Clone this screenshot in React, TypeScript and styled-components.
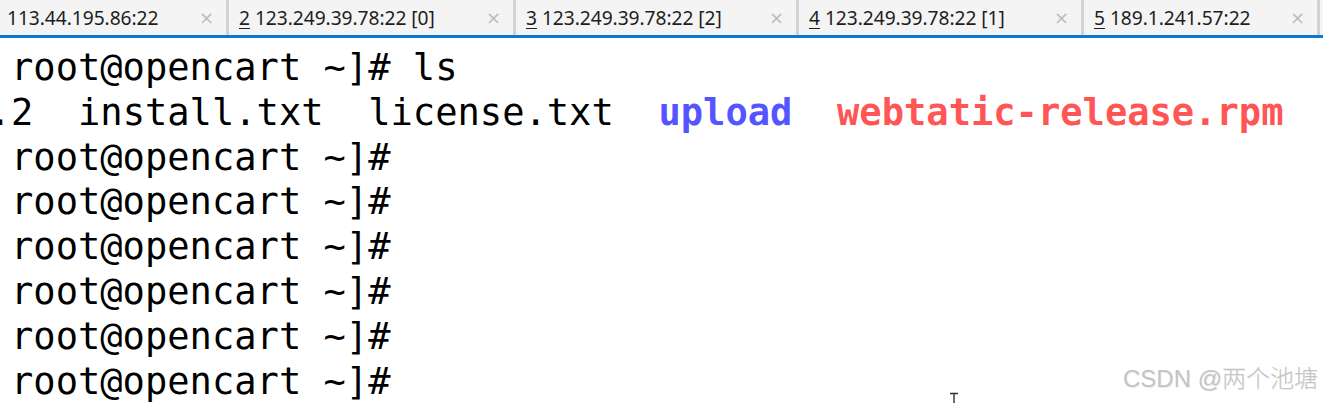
import React from "react";
import styled, { createGlobalStyle } from "styled-components";

const Global = createGlobalStyle`
  html, body { margin: 0; padding: 0; background: #ffffff; }
  body { width: 1323px; height: 403px; overflow: hidden; }
`;

const Page = styled.div`
  position: relative;
  width: 1323px;
  height: 403px;
  overflow: hidden;
  background: #ffffff;
  display: flex;
  flex-direction: column;
`;

const TabBar = styled.div`
  display: flex;
  height: 35px;
  background: #f4f4f4;
  border-bottom: 3px solid #0b78d0;
  flex: none;
`;

const Tab = styled.div<{ $w: number; $first?: boolean }>`
  flex: none;
  width: ${(p) => p.$w}px;
  display: flex;
  align-items: center;
  justify-content: space-between;
  padding: 0 12px 0 ${(p) => (p.$first ? 7 : 10)}px;
  box-sizing: border-box;
  border-right: 3px solid #d2d2d2;
  font-family: "Noto Sans", "Open Sans", sans-serif;
  font-size: 19.2px;
  letter-spacing: -0.05px;
  color: #1e1e1e;
  white-space: nowrap;
`;

const Num = styled.span`
  text-decoration: underline;
  text-underline-offset: 3px;
  margin-right: 5px;
`;

const Close = styled.span`
  color: #bdbdbd;
  font-size: 18px;
  font-family: "DejaVu Sans", sans-serif;
`;

const Terminal = styled.div`
  padding: 8px 0 0 11px;
  font-family: "DejaVu Sans Mono", monospace;
  font-size: 37.1px;
  line-height: 44.8px;
  color: #000;
  white-space: pre;
`;

const Line = styled.div<{ $shift?: boolean }>`
  height: 44.8px;
  margin-left: ${(p) => (p.$shift ? "-22.3px" : "0")};
`;

const Dir = styled.span`
  color: #5555ff;
  font-weight: bold;
`;

const Pkg = styled.span`
  color: #ff5555;
  font-weight: bold;
`;

const Watermark = styled.div`
  position: absolute;
  right: 5px;
  bottom: 9px;
  font-family: "Liberation Sans", "Noto Sans CJK SC", sans-serif;
  font-size: 24px;
  font-weight: 300;
  color: #c4c4c4;
  text-shadow: 0.6px 0.6px 0 #ececec;
`;

const Cursor = styled.svg`
  position: absolute;
  left: 949px;
  top: 392px;
`;

const tabs = [
  { n: "", label: "113.44.195.86:22", w: 229 },
  { n: "2", label: "123.249.39.78:22 [0]", w: 287 },
  { n: "3", label: "123.249.39.78:22 [2]", w: 283 },
  { n: "4", label: "123.249.39.78:22 [1]", w: 285 },
  { n: "5", label: "189.1.241.57:22", w: 236 },
];

export default function App() {
  const prompt = "root@opencart ~]#";
  return (
    <Page>
      <Global />
      <TabBar>
        {tabs.map((t, i) => (
          <Tab key={i} $w={t.w} $first={i === 0}>
            <span>
              {t.n && <Num>{t.n}</Num>}
              {t.label}
            </span>
            <Close>×</Close>
          </Tab>
        ))}
      </TabBar>
      <Terminal>
        <Line>{prompt} ls</Line>
        <Line $shift>
          {".2  install.txt  license.txt  "}
          <Dir>upload</Dir>
          {"  "}
          <Pkg>webtatic-release.rpm</Pkg>
        </Line>
        <Line>{prompt}</Line>
        <Line>{prompt}</Line>
        <Line>{prompt}</Line>
        <Line>{prompt}</Line>
        <Line>{prompt}</Line>
        <Line>{prompt}</Line>
      </Terminal>
      <Watermark>CSDN @两个池塘</Watermark>
      <Cursor width="10" height="11" viewBox="0 0 10 11">
        <path d="M1 1.5h8M5 1.5v9.5" stroke="#333" strokeWidth="1.4" fill="none" />
      </Cursor>
    </Page>
  );
}
